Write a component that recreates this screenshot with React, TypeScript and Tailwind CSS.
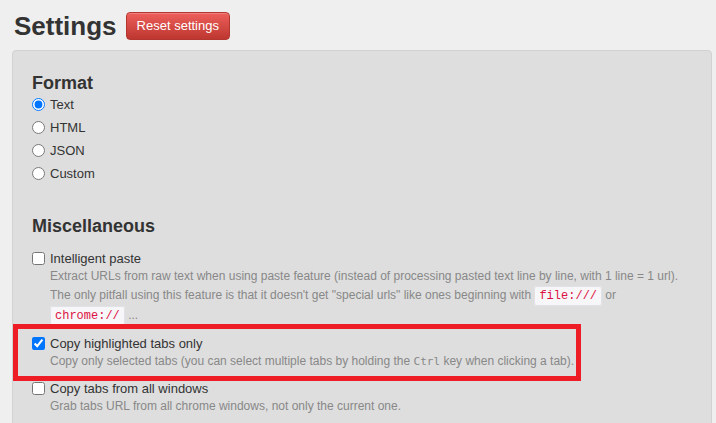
import { ReactNode } from "react"

const formats = ["Text", "HTML", "JSON", "Custom"]

function Code({ children }: { children: ReactNode }) {
  return (
    <code className="rounded-[3px] border border-[#e1e1e8] bg-[#f7f7f9] px-[4px] py-[2px] font-['Liberation_Mono',monospace] text-[12px] text-[#dd1144]">
      {children}
    </code>
  )
}

function Option({
  label,
  checked,
  highlight,
  children,
}: {
  label: string
  checked?: boolean
  highlight?: boolean
  children: ReactNode
}) {
  return (
    <div className="relative">
      {highlight && (
        <div className="pointer-events-none absolute top-[-11px] left-[-19px] h-[57px] w-[568px] border-[5px] border-[#ee1c24]" />
      )}
      <label className="flex h-[17px] items-center text-[13px] text-[#333]">
        <input type="checkbox" defaultChecked={checked} className="m-0 mr-[5px] h-[13px] w-[13px]" />
        {label}
      </label>
      <p className="pl-[18px] text-[12px] leading-[19px] text-[#888]">{children}</p>
    </div>
  )
}

export default function App() {
  return (
    <div className="min-h-[423px] bg-[#efefef] font-['Liberation_Sans',Arial,sans-serif]">
      <div className="flex items-center pt-[11px] pl-[14px]">
        <h1 className="text-[26px] leading-[30px] font-bold text-[#333]">Settings</h1>
        <button className="ml-[9px] h-[28px] rounded-[4px] border border-[#b33630] bg-gradient-to-b from-[#ee5f5b] to-[#bd362f] px-[10px] text-[13px] text-white shadow-[inset_0_1px_0_rgba(255,255,255,0.2)]">
          Reset settings
        </button>
      </div>

      <div className="mt-[9px] ml-[12px] w-[700px] rounded-t-[4px] border border-[#d2d2d2] bg-[#dedede] px-[19px] pt-[22px] pb-[20px]">
        <h2 className="text-[18px] leading-[20px] font-bold text-[#333]">Format</h2>
        <div>
          {formats.map((f, i) => (
            <label key={f} className="flex h-[23px] items-center text-[13px] text-[#333]">
              <input
                type="radio"
                name="format"
                defaultChecked={i === 0}
                className="m-0 mr-[5px] h-[13px] w-[13px]"
              />
              {f}
            </label>
          ))}
        </div>

        <h2 className="mt-[31px] text-[18px] leading-[20px] font-bold text-[#333]">Miscellaneous</h2>
        <div className="mt-[14px] flex flex-col gap-[9px]">
          <Option label="Intelligent paste">
            Extract URLs from raw text when using paste feature (instead of processing pasted text line by line, with 1 line = 1 url).
            <br />
            The only pitfall using this feature is that it doesn't get "special urls" like ones beginning with <Code>file:///</Code> or{" "}
            <Code>chrome://</Code> ...
          </Option>
          <Option label="Copy highlighted tabs only" checked highlight>
            Copy only selected tabs (you can select multiple tabs by holding the{" "}
            <span className="font-['DejaVu_Sans_Mono',monospace] text-[11px]">Ctrl</span> key when clicking a tab).
          </Option>
          <Option label="Copy tabs from all windows">
            Grab tabs URL from all chrome windows, not only the current one.
          </Option>
        </div>
      </div>
    </div>
  )
}
